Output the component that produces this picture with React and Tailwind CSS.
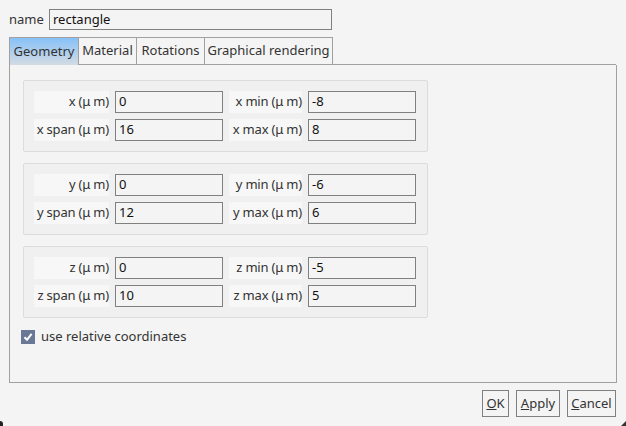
import React from "react";

const font = { fontFamily: '"Noto Sans", "Open Sans", sans-serif' };

function Field({ label, value, labelW }) {
  return (
    <div className="flex items-center gap-[6px]">
      <div className={`${labelW} h-[22px] bg-[#f7f7f7] flex items-center justify-end whitespace-nowrap text-[13px] text-[#333] tracking-[-0.2px]`}>
        {label}
      </div>
      <div className="w-[108px] h-[22px] border border-[#808080] bg-[#f4f4f4] flex items-center pl-[3px] text-[13px] text-[#111]">
        {value}
      </div>
    </div>
  );
}

function Group({ a }) {
  return (
    <div className="w-[405px] h-[72px] border border-[#dcdcdc] bg-[#f0f0f0] rounded-[2px] pl-[10px] pt-[10px] flex flex-col gap-[6px]">
      <div className="flex gap-[6px]">
        <Field label={`${a} (μ m)`} value="0" labelW="w-[75px]" />
        <Field label={`${a} min (μ m)`} value={a === "x" ? "-8" : a === "y" ? "-6" : "-5"} labelW="w-[73px]" />
      </div>
      <div className="flex gap-[6px]">
        <Field label={`${a} span (μ m)`} value={a === "x" ? "16" : a === "y" ? "12" : "10"} labelW="w-[75px]" />
        <Field label={`${a} max (μ m)`} value={a === "x" ? "8" : a === "y" ? "6" : "5"} labelW="w-[73px]" />
      </div>
    </div>
  );
}

export default function App() {
  return (
    <div className="w-[626px] h-[426px] bg-[#f4f4f4] relative overflow-hidden text-[13px] text-[#333]" style={font}>
      <div className="flex items-center pl-[9px] pt-[9px]">
        <span className="w-[40px]">name</span>
        <div className="w-[283px] h-[21px] border border-[#808080] flex items-center pl-[3px] text-[#111]">rectangle</div>
      </div>
      <div className="flex pl-[9px] mt-[7px] h-[28px] items-stretch">
        <div className="w-[69px] border-l border-t border-[#a0a0a0] bg-gradient-to-b from-[#86c1f8] to-[#d3dbe2] flex items-center justify-center">Geometry</div>
        <div className="w-[59px] border border-[#a0a0a0] flex items-center justify-center">Material</div>
        <div className="w-[68px] border-t border-r border-b border-[#a0a0a0] flex items-center justify-center">Rotations</div>
        <div className="w-[128px] border-t border-r border-b border-[#a0a0a0] flex items-center justify-center whitespace-nowrap">Graphical rendering</div>
        <div className="w-[283px] border-b border-[#a0a0a0]"></div>
      </div>
      <div className="ml-[9px] w-[608px] h-[318px] border-l border-r border-b border-[#a0a0a0] pl-[13px] pt-[15px] flex flex-col">
        <div className="flex flex-col gap-[11px]">
          <Group a="x" />
          <Group a="y" />
          <Group a="z" />
        </div>
        <div className="flex items-center mt-[9px] -ml-[2px] gap-[6px]">
          <div className="w-[14px] h-[14px] bg-[#6a7898] flex items-center justify-center">
            <svg width="10" height="10" viewBox="0 0 10 10">
              <path d="M1.5 5.2 L4 7.8 L8.6 1.8" stroke="#fff" strokeWidth="2" fill="none" />
            </svg>
          </div>
          <span>use relative coordinates</span>
        </div>
      </div>
      <div className="flex justify-end gap-[7px] pr-[10px] mt-[7px]">
        <div className="w-[27px] h-[27px] border border-[#808080] flex items-center justify-center"><span><u>O</u>K</span></div>
        <div className="w-[44px] h-[27px] border border-[#808080] flex items-center justify-center"><span><u>A</u>pply</span></div>
        <div className="w-[49px] h-[27px] border border-[#808080] flex items-center justify-center"><span><u>C</u>ancel</span></div>
      </div>
      <div className="absolute left-0 bottom-0 w-[3px] h-[5px] bg-[#222] rounded-tr-[3px]"></div>
      <div className="absolute right-0 bottom-0 w-0 h-0 border-l-[5px] border-l-transparent border-b-[5px] border-b-[#333]"></div>
    </div>
  );
}
